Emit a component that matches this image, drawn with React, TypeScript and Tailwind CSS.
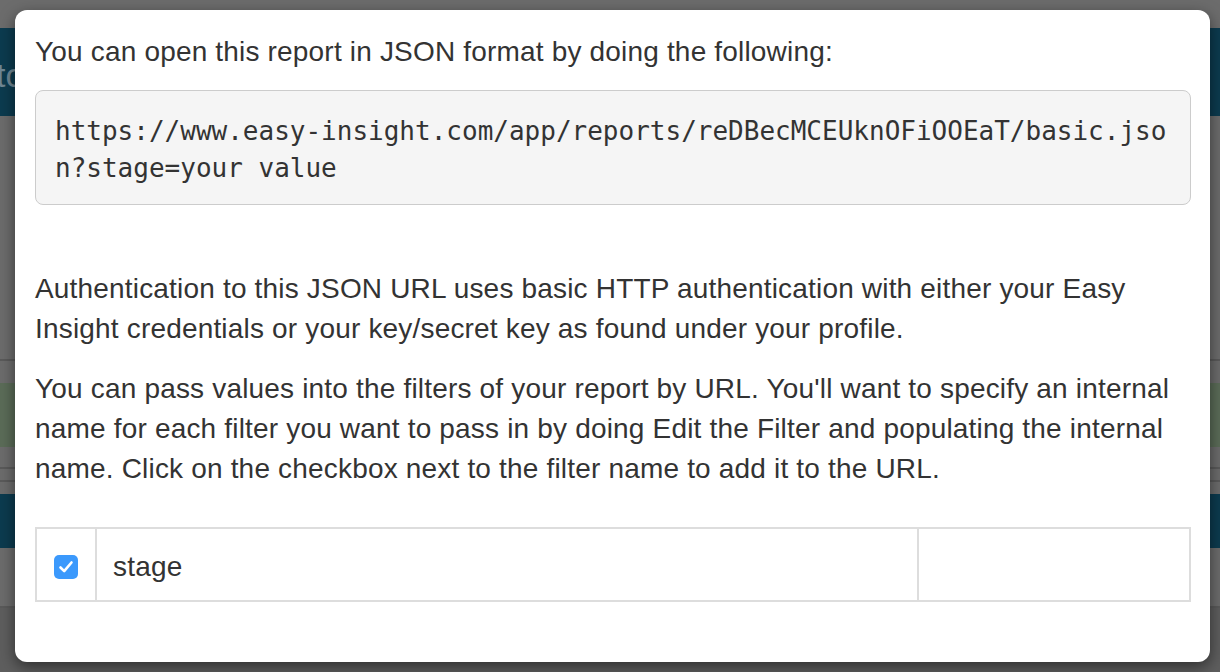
import React from "react";

const sans = { fontFamily: '"Liberation Sans", Arial, sans-serif' };

function Backdrop(): React.JSX.Element {
  // dimmed page behind the modal
  return (
    <div className="flex h-full w-full flex-col bg-[#6c6c6c]">
      <div className="h-[28px]" />
      <div className="flex h-[88px] items-center bg-[#0c3b4f]">
        <span className="-ml-[4px] pt-[6px] text-[34px] text-[#6f8794]">to</span>
      </div>
      <div className="h-[243px]" />
      <div className="h-[2px] bg-[#5a5a5a]" />
      <div className="h-[22px]" />
      <div className="h-[64px] bg-[#5b6c58]" />
      <div className="h-[20px]" />
      <div className="h-[2px] bg-[#5a5a5a]" />
      <div className="h-[11px]" />
      <div className="h-[2px] bg-[#5a5a5a]" />
      <div className="h-[12px]" />
      <div className="h-[54px] bg-[#0c3b4f]" />
      <div className="h-[58px]" />
      <div className="h-[2px] bg-[#5a5a5a]" />
      <div className="flex-1 bg-[#5e5e5e]" />
    </div>
  );
}

function Checkbox(): React.JSX.Element {
  return (
    <span className="flex h-[24px] w-[24px] items-center justify-center rounded-[5px] bg-[#3b99fc]">
      <svg width="24" height="24" viewBox="0 0 24 24" fill="none">
        <polyline
          points="6.5,12.5 10.2,16.2 17.5,7.5"
          stroke="#fff"
          strokeWidth="2.6"
          strokeLinecap="round"
          strokeLinejoin="round"
        />
      </svg>
    </span>
  );
}

export default function App(): React.JSX.Element {
  return (
    <div className="relative h-[672px] w-[1220px] overflow-hidden" style={sans}>
      <Backdrop />

      {/* Modal */}
      <div className="absolute left-[15px] top-[10px] h-[652px] w-[1195px] rounded-[12px] bg-white pl-[20px] pr-[19px] pt-[22px] text-[28px] leading-[40px] tracking-[0.18px] text-[#333] shadow-[0_5px_15px_rgba(0,0,0,0.5)]">
        <p className="mb-[18px]">You can open this report in JSON format by doing the following:</p>

        <pre
          className="mb-[64px] whitespace-pre-wrap break-all rounded-[8px] border border-[#ccc] bg-[#f5f5f5] px-[19px] pb-[17px] pt-[22px] text-[26px] leading-[37px] tracking-normal text-[#333]"
          style={{ fontFamily: '"DejaVu Sans Mono", Menlo, monospace' }}
        >
          https://www.easy-insight.com/app/reports/reDBecMCEUknOFiOOEaT/basic.json?stage=your value
        </pre>

        <p className="mb-[20px]">
          Authentication to this JSON URL uses basic HTTP authentication with either your Easy Insight credentials or
          your key/secret key as found under your profile.
        </p>

        <p className="mb-[38px]">
          You can pass values into the filters of your report by URL. You'll want to specify an internal name for each
          filter you want to pass in by doing Edit the Filter and populating the internal name. Click on the checkbox
          next to the filter name to add it to the URL.
        </p>

        {/* Filters */}
        <div className="flex border-2 border-[#ddd]">
          <div className="flex w-[60px] shrink-0 justify-center border-r-2 border-[#ddd] pb-[19px] pt-[26px]">
            <Checkbox />
          </div>
          <div className="w-[822px] shrink-0 border-r-2 border-[#ddd] px-[16px] pb-[14px] pt-[18px] leading-[39px]">
            stage
          </div>
          <div className="flex-1" />
        </div>
      </div>
    </div>
  );
}
